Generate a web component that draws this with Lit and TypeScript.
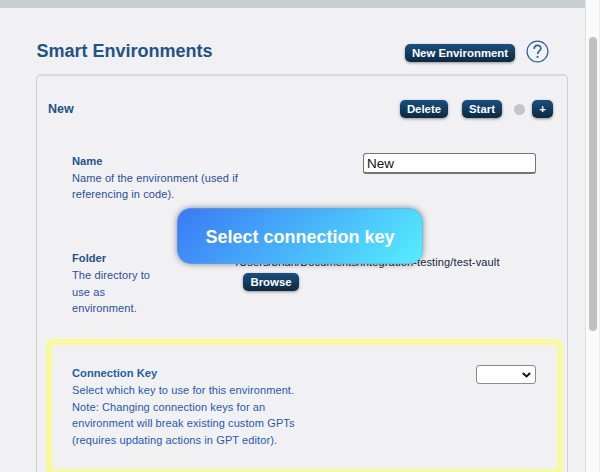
import { LitElement, html, css } from "lit";
import { customElement } from "lit/decorators.js";

@customElement("app-root")
export class AppRoot extends LitElement {
  static styles = css`
    :host {
      display: flex;
      position: relative;
      width: 600px;
      height: 472px;
      overflow: hidden;
      background: #f1f1f4;
      font-family: "Liberation Sans", Arial, sans-serif;
      color: #1c4587;
    }
    * { box-sizing: border-box; }
    .page { width: 585px; height: 472px; overflow: hidden; }
    .topbar { height: 8px; background: #c7cfd2; }
    .heading {
      display: flex;
      align-items: center;
      height: 66px;
      padding: 19px 36px 0 36.5px;
    }
    h1 { margin: 0 auto 0 0; font-size: 18px; line-height: 20px; color: #1d5488; white-space: nowrap; }
    .btn {
      display: flex;
      flex: none;
      align-items: center;
      justify-content: center;
      height: 18px;
      padding: 0;
      border: 0;
      border-radius: 5px;
      background: linear-gradient(#185083, #0d2940);
      box-shadow: 0 1px 3px rgba(0, 0, 0, 0.4);
      color: #fff;
      font: bold 11.4px/18px "Liberation Sans", Arial, sans-serif;
      white-space: nowrap;
    }
    .create { width: 110px; margin: 4px 11px 0 0; }
    .help { width: 23px; height: 23px; display: block; margin-top: 1px; }
    .card {
      width: 532px;
      height: 420px;
      margin-left: 36px;
      border: 1.5px solid #cfcfd3;
      border-top: 2px solid #d9d9dc;
      border-radius: 5px;
    }
    .bar { display: flex; align-items: center; height: 67px; padding: 0 14px 1px 11px; }
    h2 { margin: 0 auto 0 0; font-size: 12.5px; color: #1d5488; }
    .delete { width: 48px; margin-right: 14px; }
    .start { width: 40px; margin-right: 12px; }
    .dot { width: 11px; height: 11px; border-radius: 50%; background: #c5c5c7; margin-right: 7px; }
    .plus { width: 21px; }
    .row { display: flex; justify-content: space-between; padding: 0 31px 0 35px; }
    .name { height: 98px; padding-top: 10px; }
    .folder { height: 98px; padding-top: 9px; }
    h3 { margin: 0; font-size: 11.2px; line-height: 16px; color: #1d5488; }
    p { margin: 1px 0 0; font-size: 11px; line-height: 16.6px; letter-spacing: 0.1px; color: #26509a; white-space: nowrap; }
    .name p { line-height: 15.5px; margin-top: 2px; }
    .field {
      width: 173px;
      height: 21px;
      padding: 0 3px;
      border: 1px solid #747476;
      border-bottom-width: 2px;
      border-radius: 3px;
      background: #fff;
      color: #111;
      font: 13.5px/18px "Liberation Sans", Arial, sans-serif;
    }
    .location { width: 263px; margin-right: 37px; padding-top: 4px; }
    .location span { display: block; font-size: 11px; line-height: 16px; letter-spacing: 0.14px; color: #16243c; white-space: nowrap; }
    .browse { width: 56px; margin: 3px 0 0 7px; }
    .highlight {
      width: 517px;
      height: 136px;
      margin-left: 9px;
      padding: 20px 21px 0 20px;
      border: 6px solid #f8f99d;
      border-radius: 6px;
    }
    .highlight h3 { color: #1c61a3; }
    .highlight p { color: #2359b0; }
    .select {
      display: flex;
      align-items: center;
      justify-content: flex-end;
      width: 60px;
      height: 19px;
      padding-right: 4px;
      border: 1px solid #8b8b8d;
      border-radius: 3px;
      background: #fff;
    }
    .select svg { width: 9px; height: 6px; }
    .scroll { width: 15px; height: 472px; padding: 37px 3px 0; border-left: 1px solid #e1e1e3; border-right: 1px solid #ececee; background: #fafafa; }
    .thumb { width: 8px; height: 294px; border-radius: 4px; background: #c0c0c1; }
    .callout {
      position: absolute;
      left: 177px;
      top: 208px;
      width: 246px;
      height: 56px;
      border-radius: 14px;
      border: 1px solid rgba(120, 160, 210, 0.45);
      background: linear-gradient(135deg, #3a78f5, #55effe) border-box;
      box-shadow: 0 0 6px rgba(0, 0, 0, 0.42);
      color: #fff;
      font-size: 18px;
      font-weight: bold;
      line-height: 56px;
      text-align: center;
      white-space: nowrap;
    }
  `;

  render() {
    return html`
      <main class="page">
        <div class="topbar"></div>
        <header class="heading">
          <h1>Smart Environments</h1>
          <button class="btn create">New Environment</button>
          <svg class="help" viewBox="0 0 23 23" fill="none" stroke="#2c6295">
            <circle cx="11.5" cy="11.5" r="10.4" stroke-width="1.2" />
            <path d="M8.2 8.9C8.2 4.3 14.9 4.4 14.9 8.3C14.9 10.8 11.6 11 11.6 14.1" stroke-width="1.7" />
            <circle cx="11.6" cy="16.8" r="1.1" fill="#2c6295" stroke="none" />
          </svg>
        </header>
        <section class="card">
          <div class="bar">
            <h2>New</h2>
            <button class="btn delete">Delete</button>
            <button class="btn start">Start</button>
            <span class="dot"></span>
            <button class="btn plus">+</button>
          </div>
          <div class="row name">
            <div>
              <h3>Name</h3>
              <p>Name of the environment (used if<br />referencing in code).</p>
            </div>
            <input class="field" .value=${"New"} />
          </div>
          <div class="row folder">
            <div>
              <h3>Folder</h3>
              <p>The directory to<br />use as<br />environment.</p>
            </div>
            <div class="location">
              <span>/Users/brian/Documents/integration-testing/test-vault</span>
              <button class="btn browse">Browse</button>
            </div>
          </div>
          <div class="row highlight">
            <div>
              <h3>Connection Key</h3>
              <p>Select which key to use for this environment.<br />Note: Changing connection keys for an<br />environment will break existing custom GPTs<br />(requires updating actions in GPT editor).</p>
            </div>
            <div class="select">
              <svg viewBox="0 0 9 6" fill="none" stroke="#111" stroke-width="2"><path d="M.8 1L4.5 4.4L8.2 1" /></svg>
            </div>
          </div>
        </section>
      </main>
      <aside class="scroll"><div class="thumb"></div></aside>
      <div class="callout">Select connection key</div>
    `;
  }
}
